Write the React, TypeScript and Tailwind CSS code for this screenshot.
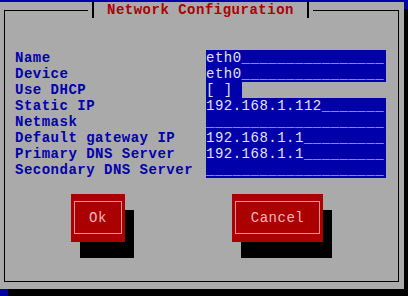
import React from 'react'

const fields: { label: string; value: string; kind?: 'check' | 'text' }[] = [
  { label: 'Name', value: 'eth0' },
  { label: 'Device', value: 'eth0' },
  { label: 'Use DHCP', value: '[ ] ', kind: 'check' },
  { label: 'Static IP', value: '192.168.1.112' },
  { label: 'Netmask', value: '' },
  { label: 'Default gateway IP', value: '192.168.1.1' },
  { label: 'Primary DNS Server', value: '192.168.1.1' },
  { label: 'Secondary DNS Server', value: '' },
]

function TuiButton({ label, width }: { label: string; width: string }) {
  return (
    <div className={`${width} h-[48px] bg-[#aa0000] shadow-[9px_16px_0_0_#000] pt-[7px] pb-[8px] px-[3px]`}>
      <div className="h-full border border-[#e49494] flex items-center justify-center text-[#f2b8b8]">
        {label}
      </div>
    </div>
  )
}

export default function App() {
  return (
    <div className="w-[408px] h-[296px] overflow-hidden bg-[#0000aa] pt-[2px] font-['Liberation_Mono',monospace] text-[14px] leading-[16px] tracking-[0.5px]">
      {/* window */}
      <div className="w-[404px] h-[287px] bg-[#aaaaaa] shadow-[8px_7px_0_0_#000] pt-[8px] pl-[4px]">
        {/* frame */}
        <div className="relative w-[395px] h-[272px] border border-black">
          {/* title on the border */}
          <div className="absolute top-[-9px] left-[83px] h-[16px] flex bg-[#aaaaaa]">
            <div className="w-[6px] border-r-2 border-black" />
            <span className="pl-[13px] pr-[13px] font-bold text-[#aa0000] whitespace-pre">
              Network Configuration
            </span>
            <div className="w-[6px] border-l-2 border-black" />
          </div>

          {/* form rows */}
          <div className="mt-[39px] ml-[10px] flex flex-col">
            {fields.map((f) => (
              <div key={f.label} className="flex h-[16px]">
                <div className="w-[191px] font-bold text-[#0000aa] whitespace-pre">{f.label}</div>
                {f.kind === 'check' ? (
                  <div className="w-[36px] bg-[#0000aa] text-[#e4e4f0] whitespace-pre">{f.value}</div>
                ) : (
                  <div className="w-[180px] bg-[#0000aa] text-[#e4e4f0] whitespace-pre overflow-hidden">
                    {f.value.padEnd(20, '_')}
                  </div>
                )}
              </div>
            ))}
          </div>

          {/* buttons */}
          <div className="mt-[16px] ml-[66px] flex gap-[107px]">
            <TuiButton label="Ok" width="w-[54px]" />
            <TuiButton label="Cancel" width="w-[91px]" />
          </div>
        </div>
      </div>
    </div>
  )
}
